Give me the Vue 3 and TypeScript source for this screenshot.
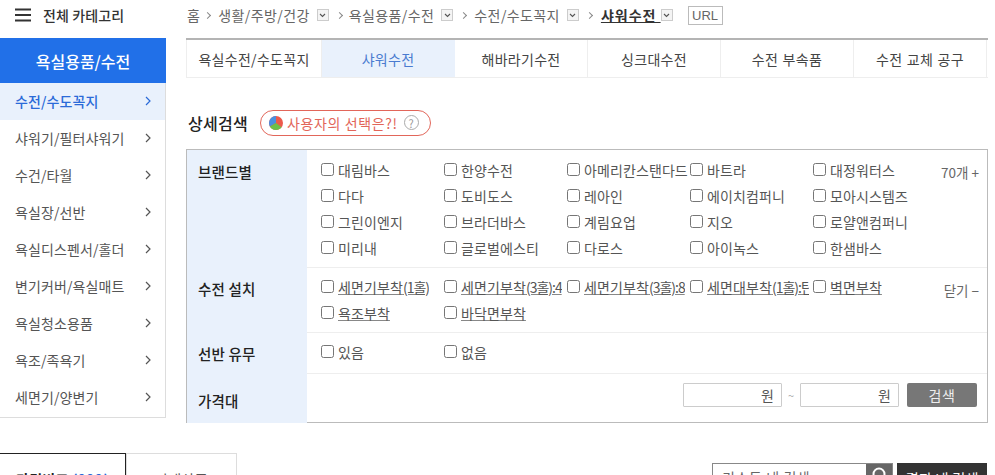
<script setup lang="ts">
const side = ['수전/수도꼭지','샤워기/필터샤워기','수건/타월','욕실장/선반','욕실디스펜서/홀더','변기커버/욕실매트','욕실청소용품','욕조/족욕기','세면기/양변기']
const tabs = ['욕실수전/수도꼭지','샤워수전','해바라기수전','싱크대수전','수전 부속품','수전 교체 공구']
const brands = ['대림바스','한양수전','아메리칸스탠다드','바트라','대정워터스','다다','도비도스','레아인','에이치컴퍼니','모아시스템즈','그린이엔지','브라더바스','계림요업','지오','로얄앤컴퍼니','미리내','글로벌에스티','다로스','아이녹스','한샘바스']
const installs = [
  { name: '세면기부착', spec: '(1홀)' },
  { name: '세면기부착', spec: '(3홀):4' },
  { name: '세면기부착', spec: '(3홀):8' },
  { name: '세면대부착', spec: '(1홀):탄' },
  { name: '벽면부착', spec: '' },
  { name: '욕조부착', spec: '' },
  { name: '바닥면부착', spec: '' },
]
const crumbs = ['생활/주방/건강','욕실용품/수전','수전/수도꼭지']
</script>

<template>
  <div class="page">
    <aside class="side">
      <div class="allcat">
        <svg class="burger" width="16" height="14" viewBox="0 0 16 14"><path d="M0 1.5H16M0 7H16M0 12.5H16" stroke="#333" stroke-width="2"/></svg>
        <span>전체 카테고리</span>
      </div>
      <div class="sidehead">욕실용품/수전</div>
      <ul class="sidelist">
        <li v-for="(s,i) in side" :key="s" :class="{on:i===0}">
          <span>{{ s }}</span>
          <svg width="6" height="10" viewBox="0 0 6 10"><path d="M1 1l4 4-4 4" fill="none" stroke="currentColor" stroke-width="1.2"/></svg>
        </li>
      </ul>
    </aside>
    <main class="main">
      <nav class="crumbs">
        <span>홈</span><i class="gt"></i>
        <template v-for="c in crumbs" :key="c">
          <span>{{ c }}</span>
          <b class="dd"><svg width="7" height="5" viewBox="0 0 7 5"><path d="M1 1l2.5 2.5L6 1" fill="none" stroke="#555" stroke-width="1.1"/></svg></b>
          <i class="gt"></i>
        </template>
        <strong>샤워수전&nbsp;</strong>
        <b class="dd last"><svg width="7" height="5" viewBox="0 0 7 5"><path d="M1 1l2.5 2.5L6 1" fill="none" stroke="#555" stroke-width="1.1"/></svg></b>
        <em class="url">URL</em>
      </nav>
      <div class="tabs">
        <div v-for="(t,i) in tabs" :key="t" class="tab" :class="{on:i===1}">{{ t }}</div>
      </div>
      <div class="headrow">
        <h3>상세검색</h3>
        <div class="pill">
          <svg width="14" height="14" viewBox="0 0 14 14"><circle cx="7" cy="7" r="7" fill="#ec5a4c"/><path d="M7 7V0A7 7 0 0 0 .9 10.4Z" fill="#4b8fe0"/><path d="M7 7L.9 10.4A7 7 0 0 0 12.6 11.2Z" fill="#6cc04a"/></svg>
          <span>사용자의 선택은?!</span>
          <b class="q">?</b>
        </div>
      </div>
      <div class="filter">
        <div class="row r1">
          <div class="label">브랜드별</div>
          <div class="grid">
            <label v-for="b in brands" :key="b" class="opt"><i class="cb"></i><span>{{ b }}</span></label>
          </div>
          <div class="more">70개 +</div>
        </div>
        <div class="row r2">
          <div class="label">수전 설치</div>
          <div class="grid">
            <label v-for="b in installs" :key="b.name + b.spec" class="opt"><i class="cb"></i><span class="u">{{ b.name }}<small v-if="b.spec">{{ b.spec }}</small></span></label>
          </div>
          <div class="more">닫기 −</div>
        </div>
        <div class="row r3">
          <div class="label">선반 유무</div>
          <div class="grid">
            <label class="opt"><i class="cb"></i><span>있음</span></label>
            <label class="opt"><i class="cb"></i><span>없음</span></label>
          </div>
        </div>
        <div class="row r4">
          <div class="label">가격대</div>
          <div class="price">
            <div class="inp">원</div><span class="til">~</span><div class="inp">원</div>
            <div class="btn">검색</div>
          </div>
        </div>
      </div>
    </main>
    <div class="bottom">
      <div class="btabs">
        <div class="bt on">가격비교 <em>(999)</em></div>
        <div class="bt">판매상품</div>
      </div>
      <div class="bsearch">
        <div class="sinput"><span>키스토 내 검색</span><b class="mag"><svg width="16" height="16" viewBox="0 0 16 16"><circle cx="8" cy="8" r="5.5" fill="none" stroke="#fff" stroke-width="2"/></svg></b></div>
        <div class="sbtn">결과 내 검색</div>
      </div>
    </div>
  </div>
</template>

<style>
html, body { margin: 0; background: #fff; overflow: hidden; }
</style>

<style scoped>
.page { width: 995px; height: 475px; position: relative; overflow: hidden; display: grid; grid-template-columns: 166px 802px; column-gap: 20px; grid-template-rows: 453px 22px; font-family: "Noto Sans CJK KR", "Noto Sans", sans-serif; font-size: 14px; color: #444; }
.side { display: flex; flex-direction: column; }
.allcat { height: 38px; display: flex; align-items: center; padding-left: 15px; gap: 12px; font-size: 14px; letter-spacing: 0.1px; font-weight: 500; color: #333; box-sizing: border-box; padding-bottom: 8px; }
.sidehead { height: 45px; background: #2170e8; color: #fff; font-size: 16px; font-weight: 500; display: flex; align-items: center; justify-content: center; }
.sidelist { list-style: none; margin: 0; padding: 0; border-right: 1px solid #ddd; border-bottom: 1px solid #ddd; height: 334px; }
.sidelist li { height: 37px; display: flex; align-items: center; justify-content: space-between; padding: 0 14px 2px 15px; box-sizing: border-box; color: #555; font-size: 14px; letter-spacing: 0.1px; }
.sidelist li.on { background: #e9f1fc; color: #2a6ad8; font-weight: 500; }
.sidelist li svg { color: #555; }
.sidelist li.on svg { color: #2a6ad8; }
.crumbs { height: 38px; padding: 0 0 8px 1px; box-sizing: border-box; display: flex; align-items: center; color: #666; font-size: 14px; letter-spacing: 0.4px; }
.gt { width: 4px; height: 4px; border-top: 1px solid #888; border-right: 1px solid #888; transform: rotate(45deg); margin: 0 8px 0 5px; }
.gt:nth-of-type(2) { margin-right: 7px; }
.gt:nth-of-type(3) { margin-right: 8px; }
.gt:nth-of-type(4) { margin-right: 9px; }
.dd { width: 12px; height: 12px; box-sizing: border-box; border: 1px solid #ccc; background: #f4f4f4; margin-left: 7px; display: flex; align-items: center; justify-content: center; }
.dd + .gt { margin-left: 8px; }
.crumbs strong { color: #333; font-weight: 700; text-decoration: underline; letter-spacing: 1px; }
.dd.last { margin-left: 0; }
.url { font-style: normal; border: 1px solid #bbb; height: 19px; line-height: 18px; text-align: center; margin-left: 15px; font-size: 13px; color: #666; box-sizing: border-box; font-family: "Liberation Sans", sans-serif; width: 35px; letter-spacing: 0; }
.tabs { display: grid; grid-template-columns: 136px repeat(5, 133px) ; border-top: 2px solid #b4b4b4; height: 40px; box-sizing: border-box; border-bottom: 1px solid #eee; width: 802px; }
.tab { display: flex; align-items: center; justify-content: center; border-right: 1px solid #eee; color: #444; font-size: 14px; letter-spacing: 0.3px; word-spacing: 1px; }
.tab:first-child { border-left: 1px solid #eee; }
.tab.on { background: #e9f1fc; color: #4a7bd0; border-right-color: #e9f1fc; }
.headrow { height: 71px; display: flex; align-items: center; gap: 12px; padding: 18px 0 0 2px; box-sizing: border-box; }
h3 { margin: 0; font-size: 16px; font-weight: 500; color: #222; letter-spacing: 0.3px; }
.pill { height: 26px; border: 1px solid #e2665a; border-radius: 14px; box-sizing: border-box; padding: 0 10px 0 8px; display: flex; align-items: center; gap: 4px; color: #e2665a; font-size: 14px; letter-spacing: 0.6px; width: 171px; white-space: nowrap; }
.q { width: 15px; height: 15px; border: 1px solid #aaa; border-radius: 50%; color: #999; font-size: 11px; font-weight: 400; display: flex; align-items: center; justify-content: center; margin-left: 2px; box-sizing: border-box; flex: none; letter-spacing: 0; }
.filter { border: 1px solid #bbb; width: 802px; height: 274px; box-sizing: border-box; }
.row { display: grid; grid-template-columns: 120px 1fr; position: relative; border-bottom: 1px solid #eee; box-sizing: border-box; }
.row:last-child { border-bottom: 0; }
.r1 { height: 118px; } .r2 { height: 65px; } .r3 { height: 41px; } .r4 { height: 48px; }
.label { background: #e9f1fc; padding: 10px 0 0 11px; font-size: 14.5px; font-weight: 500; color: #222; margin-bottom: -1px; letter-spacing: 0.2px; }
.r1 .label { padding-top: 11px; }
.r4 .label { padding-top: 16px; }
.grid { display: grid; grid-template-columns: repeat(5, 123px); grid-auto-rows: 26px; padding: 8px 0 0 14px; align-content: start; }
.r2 .grid, .r3 .grid { padding-top: 7px; }
.opt { display: flex; align-items: center; gap: 4px; font-size: 14px; letter-spacing: 0.1px; color: #555; white-space: nowrap; height: 26px; box-sizing: border-box; line-height: 22px; }
.opt span { margin-top: -3px; }
.cb { width: 13px; height: 13px; border: 1px solid #767676; border-radius: 2.5px; flex: none; box-sizing: border-box; margin-bottom: 3px; background: #fff; }
.opt .u { text-decoration: underline; text-decoration-color: #888; max-width: 102px; overflow: hidden; }
.u small { font-size: inherit; letter-spacing: -1px; }
.more { position: absolute; right: 8px; top: 12px; font-size: 13.5px; color: #666; }
.price { display: flex; align-items: center; justify-content: flex-end; padding: 0 10px 7px 0; }
.inp { width: 99px; height: 24px; border: 1px solid #ccc; box-sizing: border-box; text-align: right; padding-right: 7px; line-height: 22px; color: #555; border-radius: 1px; }
.til { width: 18px; text-align: center; color: #aaa; font-size: 11px; }
.btn { width: 70px; height: 24px; background: #777; color: #eee; text-align: center; line-height: 24px; margin-left: 8px; border-radius: 2px; letter-spacing: 0.5px; }
.bottom { grid-column: 1 / -1; display: flex; justify-content: space-between; height: 22px; }
.btabs { display: flex; }
.bt { width: 111px; height: 40px; border: 1px solid #ddd; border-bottom: 0; box-sizing: border-box; text-align: center; padding-top: 15px; color: #555; line-height: 20px; letter-spacing: 0.3px; }
.bt.on { width: 126px; border: 1px solid #222; border-left: 0; font-weight: 700; color: #222; }
.bt em { font-style: normal; color: #2a6ad8; }
.bsearch { display: flex; margin-right: 1px; padding-top: 10px; }
.sinput { width: 181px; height: 30px; border: 1px solid #888; box-sizing: border-box; display: flex; justify-content: space-between; padding-left: 9px; color: #666; letter-spacing: 0.6px; }
.sinput span { padding-top: 3px; }
.mag { width: 26px; background: #666; display: flex; justify-content: center; padding-top: 2px; height: 28px; flex: none; }
.sbtn { width: 90px; height: 30px; background: #333; color: #fff; margin-left: 4px; text-align: center; line-height: 32px; font-size: 14.5px; }
</style>
